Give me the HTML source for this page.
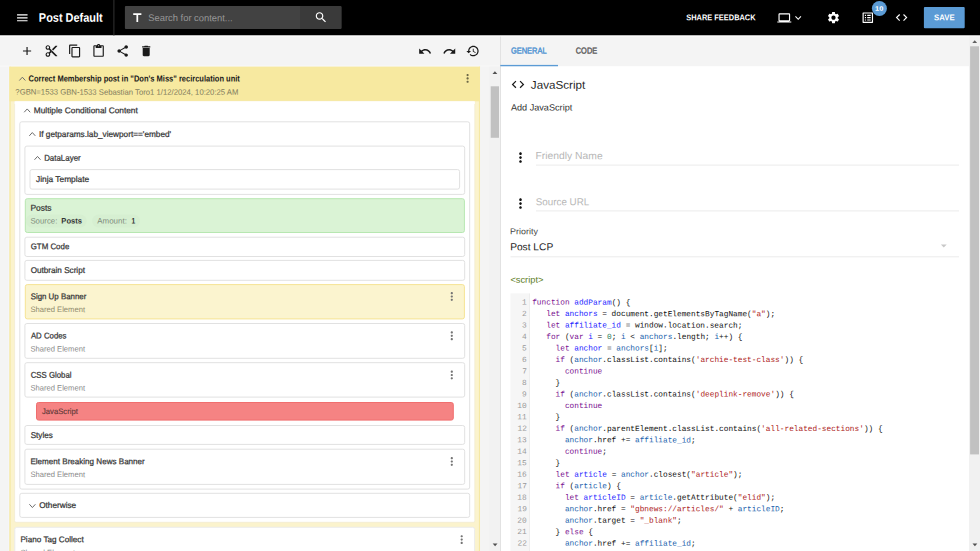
<!DOCTYPE html>
<html><head><meta charset="utf-8"><title>Post Default</title>
<style>
html,body{margin:0;padding:0;}
body{width:980px;height:551px;overflow:hidden;position:relative;background:#f4f4f4;font-family:'Liberation Sans', sans-serif;}
#shapes{position:absolute;left:0;top:0;}
.t{position:absolute;white-space:pre;transform-origin:0 0;}
.k{color:#7a1090}.d{color:#2222ff}.v{color:#1a62ad}.s{color:#ad2222}.n{color:#2a7a58}
</style></head><body>
<svg id="shapes" width="980" height="551" viewBox="0 0 980 551">
<rect x="0.00" y="0.00" width="980.00" height="35.50" fill="#000"/>
<rect x="0.00" y="35.50" width="980.00" height="1.10" fill="#fdfdfd"/>
<path transform="translate(15.30 10.80) scale(0.5833)" fill="#fff" fill-opacity="1" d="M3 18h18v-2H3v2zm0-5h18v-2H3v2zm0-7v2h18V6H3z"/>
<rect x="113.40" y="0.00" width="1.00" height="35.50" fill="#333"/>
<rect x="124.90" y="6.00" width="216.50" height="23.10" fill="#424242" rx="1"/>
<rect x="300.00" y="6.00" width="41.40" height="23.10" fill="#3a3a3a" rx="1"/>
<path transform="translate(130.30 10.80) scale(0.5833)" fill="#fff" fill-opacity="1" d="M5 4v3h5.5v12h3V7H19V4z"/>
<path transform="translate(314.00 10.40) scale(0.5833)" fill="#fff" fill-opacity="1" d="M15.5 14h-.79l-.28-.27C15.41 12.59 16 11.11 16 9.5 16 5.91 13.09 3 9.5 3S3 5.91 3 9.5 5.91 16 9.5 16c1.61 0 3.09-.59 4.23-1.57l.27.28v.79l5 4.99L20.49 19l-4.99-5zm-6 0C7.01 14 5 11.99 5 9.5S7.01 5 9.5 5 14 7.01 14 9.5 11.99 14 9.5 14z"/>
<path transform="translate(777.30 10.90) scale(0.5833)" fill="#fff" fill-opacity="1" d="M20 18c1.1 0 1.99-.9 1.99-2L22 6c0-1.1-.9-2-2-2H4c-1.1 0-2 .9-2 2v10c0 1.1.9 2 2 2H0v2h24v-2h-4zM4 6h16v10H4V6z"/>
<path transform="translate(791.95 11.55) scale(0.5208)" fill="#fff" fill-opacity="1" d="M16.59 8.59L12 13.17 7.41 8.59 6 10l6 6 6-6z"/>
<path transform="translate(826.50 10.70) scale(0.5833)" fill="#fff" fill-opacity="1" d="M19.14 12.94c.04-.3.06-.61.06-.94 0-.32-.02-.64-.07-.94l2.03-1.58c.18-.14.23-.41.12-.61l-1.92-3.32c-.12-.22-.37-.29-.59-.22l-2.39.96c-.5-.38-1.03-.7-1.62-.94l-.36-2.54c-.04-.24-.24-.41-.48-.41h-3.84c-.24 0-.43.17-.47.41l-.36 2.54c-.59.24-1.13.57-1.62.94l-2.39-.96c-.22-.08-.47 0-.59.22L2.74 8.87c-.12.21-.08.47.12.61l2.03 1.58c-.05.3-.09.63-.09.94s.02.64.07.94l-2.03 1.58c-.18.14-.23.41-.12.61l1.92 3.32c.12.22.37.29.59.22l2.39-.96c.5.38 1.03.7 1.62.94l.36 2.54c.05.24.24.41.48.41h3.84c.24 0 .44-.17.47-.41l.36-2.54c.59-.24 1.13-.56 1.62-.94l2.39.96c.22.08.47 0 .59-.22l1.92-3.32c.12-.22.07-.47-.12-.61l-2.01-1.58zM12 15.6c-1.98 0-3.6-1.62-3.6-3.6s1.62-3.6 3.6-3.6 3.6 1.62 3.6 3.6-1.62 3.6-3.6 3.6z"/>
<path transform="translate(860.80 10.70) scale(0.5833)" fill="#fff" fill-opacity="1" d="M11 7h6v2h-6zm0 4h6v2h-6zm0 4h6v2h-6zM7 7h2v2H7zm0 4h2v2H7zm0 4h2v2H7zM20.1 3H3.9c-.5 0-.9.4-.9.9v16.2c0 .4.4.9.9.9h16.2c.4 0 .9-.5.9-.9V3.9c0-.5-.5-.9-.9-.9zM19 19H5V5h14v14z"/>
<circle cx="879.4" cy="8.5" r="7.5" fill="#5b9bd5"/>
<path transform="translate(894.60 10.60) scale(0.5833)" fill="#fff" fill-opacity="1" d="M9.4 16.6L4.8 12l4.6-4.6L8 6l-6 6 6 6 1.4-1.4zm5.2 0l4.6-4.6-4.6-4.6L16 6l6 6-6 6-1.4-1.4z"/>
<rect x="923.90" y="7.10" width="40.80" height="21.20" fill="#5b9bd5" rx="1"/>
<path transform="translate(20.05 44.00) scale(0.5833)" fill="#1a1a1a" fill-opacity="1" d="M19 13h-6v6h-2v-6H5v-2h6V5h2v6h6v2z"/>
<path transform="translate(44.40 44.00) scale(0.5833)" fill="#1a1a1a" fill-opacity="1" d="M9.64 7.64c.23-.5.36-1.05.36-1.64 0-2.21-1.79-4-4-4S2 3.79 2 6s1.79 4 4 4c.59 0 1.14-.13 1.64-.36L10 12l-2.36 2.36C7.14 14.13 6.59 14 6 14c-2.21 0-4 1.79-4 4s1.79 4 4 4 4-1.79 4-4c0-.59-.13-1.14-.36-1.64L12 14l7 7h3v-1L9.64 7.64zM6 8c-1.1 0-2-.89-2-2s.9-2 2-2 2 .89 2 2-.9 2-2 2zm0 12c-1.1 0-2-.89-2-2s.9-2 2-2 2 .89 2 2-.9 2-2 2zm6-7.5c-.28 0-.5-.22-.5-.5s.22-.5.5-.5.5.22.5.5-.22.5-.5.5zM19 3l-6 6 2 2 7-7V3z"/>
<path transform="translate(67.90 44.00) scale(0.5833)" fill="#1a1a1a" fill-opacity="1" d="M16 1H4c-1.1 0-2 .9-2 2v14h2V3h12V1zm3 4H8c-1.1 0-2 .9-2 2v14c0 1.1.9 2 2 2h11c1.1 0 2-.9 2-2V7c0-1.1-.9-2-2-2zm0 16H8V7h11v14z"/>
<path transform="translate(91.60 44.00) scale(0.5833)" fill="#1a1a1a" fill-opacity="1" d="M19 2h-4.18C14.4.84 13.3 0 12 0c-1.3 0-2.4.84-2.82 2H5c-1.1 0-2 .9-2 2v16c0 1.1.9 2 2 2h14c1.1 0 2-.9 2-2V4c0-1.1-.9-2-2-2zm-7 0c.55 0 1 .45 1 1s-.45 1-1 1-1-.45-1-1 .45-1 1-1zm7 18H5V4h2v3h10V4h2v16z"/>
<path transform="translate(115.70 44.00) scale(0.5833)" fill="#1a1a1a" fill-opacity="1" d="M18 16.08c-.76 0-1.44.3-1.96.77L8.91 12.7c.05-.23.09-.46.09-.7s-.04-.47-.09-.7l7.05-4.11c.54.5 1.25.81 2.04.81 1.66 0 3-1.34 3-3s-1.34-3-3-3-3 1.34-3 3c0 .24.04.47.09.7L8.04 9.81C7.5 9.31 6.79 9 6 9c-1.66 0-3 1.34-3 3s1.34 3 3 3c.79 0 1.5-.31 2.04-.81l7.12 4.16c-.05.21-.08.43-.08.65 0 1.61 1.31 2.92 2.92 2.92 1.61 0 2.92-1.31 2.92-2.92s-1.31-2.92-2.92-2.92z"/>
<path transform="translate(139.20 44.00) scale(0.5833)" fill="#1a1a1a" fill-opacity="1" d="M6 19c0 1.1.9 2 2 2h8c1.1 0 2-.9 2-2V7H6v12zM19 4h-3.5l-1-1h-5l-1 1H5v2h14V4z"/>
<path transform="translate(418.00 44.30) scale(0.5833)" fill="#1a1a1a" fill-opacity="1" d="M12.5 8c-2.65 0-5.05.99-6.9 2.6L2 7v9h9l-3.62-3.62c1.39-1.16 3.16-1.88 5.12-1.88 3.54 0 6.55 2.31 7.6 5.5l2.37-.78C21.08 11.03 17.15 8 12.5 8z"/>
<path transform="translate(442.40 44.30) scale(0.5833)" fill="#1a1a1a" fill-opacity="1" d="M18.4 10.6C16.55 8.99 14.15 8 11.5 8c-4.65 0-8.58 3.03-9.96 7.22L3.9 16c1.05-3.19 4.05-5.5 7.6-5.5 1.95 0 3.73.72 5.12 1.88L13 16h9V7l-3.6 3.6z"/>
<path transform="translate(465.80 44.00) scale(0.5833)" fill="#1a1a1a" fill-opacity="1" d="M13 3c-4.97 0-9 4.03-9 9H1l3.89 3.89.07.14L9 12H6c0-3.87 3.13-7 7-7s7 3.13 7 7-3.13 7-7 7c-1.93 0-3.68-.79-4.94-2.06l-1.42 1.42C8.27 19.99 10.51 21 13 21c4.97 0 9-4.03 9-9s-4.03-9-9-9zm-1 5v5l4.28 2.54.72-1.21-3.5-2.08V8H12z"/>
<rect x="0.00" y="65.60" width="500.00" height="1.00" fill="#f9f9f9"/>
<rect x="8.20" y="66.60" width="1.20" height="484.40" fill="#f6f6fa"/>
<rect x="9.40" y="66.70" width="470.70" height="484.30" fill="#fbf3cd"/>
<rect x="9.40" y="66.70" width="1.30" height="484.30" fill="#f6e8a4"/>
<rect x="478.90" y="66.70" width="1.20" height="484.30" fill="#f6e8a4"/>
<rect x="9.40" y="66.70" width="470.70" height="34.60" fill="#f7e9a0"/>
<path d="M19.35 80.50L22.35 77.20L25.35 80.50" fill="none" stroke="#6c6c6c" stroke-width="1.0"/>
<path transform="translate(460.90 71.70) scale(0.5583)" fill="#6c6746" fill-opacity="1" d="M12 8c1.1 0 2-.9 2-2s-.9-2-2-2-2 .9-2 2 .9 2 2 2zm0 2c-1.1 0-2 .9-2 2s.9 2 2 2 2-.9 2-2-.9-2-2-2zm0 6c-1.1 0-2 .9-2 2s.9 2 2 2 2-.9 2-2-.9-2-2-2z"/>
<rect x="14.60" y="101.30" width="460.20" height="421.00" fill="#fff" rx="1.5" stroke="#f0ead0" stroke-width="0.7"/>
<rect x="14.60" y="101.30" width="460.20" height="2.70" fill="#fff"/>
<path d="M24.20 112.25L27.20 108.95L30.20 112.25" fill="none" stroke="#6c6c6c" stroke-width="1.0"/>
<rect x="19.80" y="121.80" width="449.90" height="367.30" fill="#fff" rx="2" stroke="#e1e1e1" stroke-width="1.0"/>
<path d="M29.30 135.85L32.30 132.55L35.30 135.85" fill="none" stroke="#6c6c6c" stroke-width="1.0"/>
<rect x="24.90" y="146.10" width="439.80" height="48.30" fill="#fff" rx="2" stroke="#e1e1e1" stroke-width="1.0"/>
<path d="M34.50 159.75L37.50 156.45L40.50 159.75" fill="none" stroke="#6c6c6c" stroke-width="1.0"/>
<rect x="30.00" y="169.60" width="429.60" height="19.50" fill="#fff" rx="2" stroke="#e1e1e1" stroke-width="1.0"/>
<rect x="25.30" y="198.70" width="439.10" height="33.80" fill="#daf3d5" rx="2" stroke="#b7e7b1" stroke-width="1.0"/>
<rect x="25.80" y="214.60" width="60.90" height="12.80" fill="#d6efd1" rx="6.4"/>
<rect x="92.20" y="214.60" width="47.80" height="12.80" fill="#d6efd1" rx="6.4"/>
<rect x="24.90" y="237.20" width="439.80" height="19.30" fill="#fff" rx="2" stroke="#e1e1e1" stroke-width="1.0"/>
<rect x="24.90" y="260.40" width="439.80" height="19.90" fill="#fff" rx="2" stroke="#e1e1e1" stroke-width="1.0"/>
<rect x="25.30" y="284.60" width="439.10" height="34.30" fill="#fbf4cf" rx="2" stroke="#f5e394" stroke-width="1.0"/>
<path transform="translate(445.10 289.80) scale(0.5583)" fill="#747474" fill-opacity="1" d="M12 8c1.1 0 2-.9 2-2s-.9-2-2-2-2 .9-2 2 .9 2 2 2zm0 2c-1.1 0-2 .9-2 2s.9 2 2 2 2-.9 2-2-.9-2-2-2zm0 6c-1.1 0-2 .9-2 2s.9 2 2 2 2-.9 2-2-.9-2-2-2z"/>
<rect x="24.90" y="323.50" width="439.80" height="34.80" fill="#fff" rx="2" stroke="#e1e1e1" stroke-width="1.0"/>
<path transform="translate(445.10 329.10) scale(0.5583)" fill="#747474" fill-opacity="1" d="M12 8c1.1 0 2-.9 2-2s-.9-2-2-2-2 .9-2 2 .9 2 2 2zm0 2c-1.1 0-2 .9-2 2s.9 2 2 2 2-.9 2-2-.9-2-2-2zm0 6c-1.1 0-2 .9-2 2s.9 2 2 2 2-.9 2-2-.9-2-2-2z"/>
<rect x="24.90" y="362.70" width="439.80" height="34.40" fill="#fff" rx="2" stroke="#e1e1e1" stroke-width="1.0"/>
<path transform="translate(445.10 368.30) scale(0.5583)" fill="#747474" fill-opacity="1" d="M12 8c1.1 0 2-.9 2-2s-.9-2-2-2-2 .9-2 2 .9 2 2 2zm0 2c-1.1 0-2 .9-2 2s.9 2 2 2 2-.9 2-2-.9-2-2-2zm0 6c-1.1 0-2 .9-2 2s.9 2 2 2 2-.9 2-2-.9-2-2-2z"/>
<rect x="36.50" y="402.50" width="416.80" height="17.60" fill="#f58383" rx="2" stroke="#f06e6e" stroke-width="1.0"/>
<rect x="24.90" y="425.50" width="439.80" height="18.90" fill="#fff" rx="2" stroke="#e1e1e1" stroke-width="1.0"/>
<rect x="24.90" y="449.20" width="439.80" height="35.20" fill="#fff" rx="2" stroke="#e1e1e1" stroke-width="1.0"/>
<path transform="translate(445.10 454.80) scale(0.5583)" fill="#747474" fill-opacity="1" d="M12 8c1.1 0 2-.9 2-2s-.9-2-2-2-2 .9-2 2 .9 2 2 2zm0 2c-1.1 0-2 .9-2 2s.9 2 2 2 2-.9 2-2-.9-2-2-2zm0 6c-1.1 0-2 .9-2 2s.9 2 2 2 2-.9 2-2-.9-2-2-2z"/>
<rect x="19.80" y="493.30" width="449.90" height="24.10" fill="#fff" rx="2" stroke="#e1e1e1" stroke-width="1.0"/>
<path d="M29.40 504.25L32.40 507.55L35.40 504.25" fill="none" stroke="#6c6c6c" stroke-width="1.0"/>
<rect x="14.80" y="527.30" width="459.80" height="37.70" fill="#fff" rx="2" stroke="#ececec" stroke-width="1.0"/>
<path transform="translate(455.00 532.90) scale(0.5583)" fill="#747474" fill-opacity="1" d="M12 8c1.1 0 2-.9 2-2s-.9-2-2-2-2 .9-2 2 .9 2 2 2zm0 2c-1.1 0-2 .9-2 2s.9 2 2 2 2-.9 2-2-.9-2-2-2zm0 6c-1.1 0-2 .9-2 2s.9 2 2 2 2-.9 2-2-.9-2-2-2z"/>
<rect x="480.10" y="66.60" width="20.20" height="484.40" fill="#f4f4f4"/>
<rect x="489.20" y="66.60" width="11.10" height="484.40" fill="#f2f2f2"/>
<rect x="490.70" y="86.30" width="8.30" height="51.50" fill="#c1c1c1"/>
<polygon points="492.50,74.05 494.90,71.35 497.30,74.05" fill="#505050"/>
<polygon points="492.70,543.45 495.10,546.15 497.50,543.45" fill="#505050"/>
<rect x="500.30" y="66.20" width="468.70" height="484.80" fill="#fff"/>
<rect x="500.00" y="36.60" width="1.00" height="514.40" fill="#e2e2e2"/>
<rect x="500.30" y="64.90" width="57.70" height="1.35" fill="#5b9bd5"/>
<path transform="translate(510.45 76.85) scale(0.6292)" fill="#1a1a1a" fill-opacity="1" d="M9.4 16.6L4.8 12l4.6-4.6L8 6l-6 6 6 6 1.4-1.4zm5.2 0l4.6-4.6-4.6-4.6L16 6l6 6-6 6-1.4-1.4z"/>
<path transform="translate(512.65 149.75) scale(0.6542)" fill="#111" fill-opacity="1" d="M12 8c1.1 0 2-.9 2-2s-.9-2-2-2-2 .9-2 2 .9 2 2 2zm0 2c-1.1 0-2 .9-2 2s.9 2 2 2 2-.9 2-2-.9-2-2-2zm0 6c-1.1 0-2 .9-2 2s.9 2 2 2 2-.9 2-2-.9-2-2-2z"/>
<rect x="536.00" y="164.60" width="423.00" height="1.00" fill="#ececec"/>
<path transform="translate(512.65 195.75) scale(0.6542)" fill="#111" fill-opacity="1" d="M12 8c1.1 0 2-.9 2-2s-.9-2-2-2-2 .9-2 2 .9 2 2 2zm0 2c-1.1 0-2 .9-2 2s.9 2 2 2 2-.9 2-2-.9-2-2-2zm0 6c-1.1 0-2 .9-2 2s.9 2 2 2 2-.9 2-2-.9-2-2-2z"/>
<rect x="536.00" y="210.40" width="423.00" height="1.00" fill="#ececec"/>
<rect x="510.50" y="256.30" width="448.50" height="1.00" fill="#ececec"/>
<path transform="translate(936.80 238.70) scale(0.5833)" fill="#c8c8c8" fill-opacity="1" d="M7 10l5 5 5-5z"/>
<rect x="510.50" y="293.40" width="19.10" height="257.60" fill="#f6f6f6"/>
<rect x="529.00" y="293.40" width="0.70" height="257.60" fill="#e9e9e9"/>
<rect x="969.00" y="36.60" width="11.00" height="514.40" fill="#f1f1f1"/>
<rect x="970.10" y="46.30" width="8.90" height="408.10" fill="#c1c1c1"/>
<polygon points="972.30,43.05 974.70,40.35 977.10,43.05" fill="#606060"/>
<polygon points="972.50,543.45 974.90,546.15 977.30,543.45" fill="#505050"/>
</svg>
<div class="t" style="left:38px;top:9px;line-height:17px;transform:matrix(0.8905,0.0005,0,1,0.83,0.80);font-family:'Liberation Sans', sans-serif;font-size:12.3px;font-weight:700;color:#fff;">Post Default</div>
<div class="t" style="left:148px;top:11px;line-height:13px;transform:matrix(0.9840,0.0005,0,1,0.31,0.10);font-family:'Liberation Sans', sans-serif;font-size:9.52px;font-weight:400;color:#989898;">Search for content...</div>
<div class="t" style="left:686px;top:11px;line-height:12px;transform:matrix(0.8948,0.0005,0,1,0.28,0.20);font-family:'Liberation Sans', sans-serif;font-size:8.3px;font-weight:700;color:#fff;">SHARE FEEDBACK</div>
<div class="t" style="left:875px;top:3px;line-height:9px;transform:matrix(1.1538,0.0005,0,1,0.12,0.80);font-family:'Liberation Sans', sans-serif;font-size:6.4px;font-weight:700;color:#fff;">10</div>
<div class="t" style="left:934px;top:11px;line-height:12px;transform:matrix(0.9349,0.0005,0,1,0.07,0.30);font-family:'Liberation Sans', sans-serif;font-size:8.3px;font-weight:700;color:#fff;">SAVE</div>
<div class="t" style="left:28px;top:72px;line-height:12px;transform:matrix(0.8534,0.0005,0,1,0.59,0.50);font-family:'Liberation Sans', sans-serif;font-size:8.8px;font-weight:700;color:#1a1a1a;">Correct Membership post in "Don's Miss" recirculation unit</div>
<div class="t" style="left:15px;top:86px;line-height:11px;transform:matrix(0.9854,0.0005,0,1,0.35,0.60);font-family:'Liberation Sans', sans-serif;font-size:7.84px;font-weight:400;color:#7f7b5c;">?GBN=1533 GBN-1533 Sebastian Toro1 1/12/2024, 10:20:25 AM</div>
<div class="t" style="left:33px;top:104px;line-height:12px;transform:matrix(0.9928,0.0005,0,1,0.80,0.30);font-family:'Liberation Sans', sans-serif;font-size:8.4px;font-weight:400;color:#363636;-webkit-text-stroke:0.24px #363636;">Multiple Conditional Content</div>
<div class="t" style="left:38px;top:127px;line-height:12px;transform:matrix(0.9828,0.0005,0,1,0.96,0.90);font-family:'Liberation Sans', sans-serif;font-size:8.4px;font-weight:400;color:#363636;-webkit-text-stroke:0.24px #363636;">If getparams.lab_viewport=='embed'</div>
<div class="t" style="left:44px;top:151px;line-height:12px;transform:matrix(0.9464,0.0005,0,1,0.13,0.70);font-family:'Liberation Sans', sans-serif;font-size:8.4px;font-weight:400;color:#363636;-webkit-text-stroke:0.24px #363636;">DataLayer</div>
<div class="t" style="left:36px;top:173px;line-height:12px;transform:matrix(0.9972,0.0005,0,1,0.00,0.00);font-family:'Liberation Sans', sans-serif;font-size:8.4px;font-weight:400;color:#363636;-webkit-text-stroke:0.24px #363636;">Jinja Template</div>
<div class="t" style="left:30px;top:201px;line-height:12px;transform:matrix(1.0123,0.0005,0,1,0.39,0.70);font-family:'Liberation Sans', sans-serif;font-size:8.4px;font-weight:400;color:#363636;-webkit-text-stroke:0.24px #363636;">Posts</div>
<div class="t" style="left:30px;top:215px;line-height:11px;transform:matrix(0.9981,0.0005,0,1,0.40,0.40);font-family:'Liberation Sans', sans-serif;font-size:7.84px;font-weight:400;color:#7f8c7c;">Source:</div>
<div class="t" style="left:61px;top:215px;line-height:11px;transform:matrix(0.9707,0.0005,0,1,0.31,0.40);font-family:'Liberation Sans', sans-serif;font-size:7.84px;font-weight:700;color:#333;">Posts</div>
<div class="t" style="left:97px;top:215px;line-height:11px;transform:matrix(1.0175,0.0005,0,1,0.20,0.40);font-family:'Liberation Sans', sans-serif;font-size:7.84px;font-weight:400;color:#7f8c7c;">Amount:</div>
<div class="t" style="left:131px;top:215px;line-height:11px;transform:matrix(0.8533,0.0005,0,1,0.57,0.40);font-family:'Liberation Sans', sans-serif;font-size:7.84px;font-weight:700;color:#333;">1</div>
<div class="t" style="left:30px;top:240px;line-height:12px;transform:matrix(0.9432,0.0005,0,1,0.66,0.30);font-family:'Liberation Sans', sans-serif;font-size:8.4px;font-weight:400;color:#363636;-webkit-text-stroke:0.24px #363636;">GTM Code</div>
<div class="t" style="left:30px;top:263px;line-height:12px;transform:matrix(0.9722,0.0005,0,1,0.66,0.90);font-family:'Liberation Sans', sans-serif;font-size:8.4px;font-weight:400;color:#363636;-webkit-text-stroke:0.24px #363636;">Outbrain Script</div>
<div class="t" style="left:30px;top:290px;line-height:12px;transform:matrix(0.9407,0.0005,0,1,0.66,0.20);font-family:'Liberation Sans', sans-serif;font-size:8.4px;font-weight:400;color:#363636;-webkit-text-stroke:0.24px #363636;">Sign Up Banner</div>
<div class="t" style="left:30px;top:304px;line-height:11px;transform:matrix(0.9730,0.0005,0,1,0.41,0.10);font-family:'Liberation Sans', sans-serif;font-size:7.84px;font-weight:400;color:#8f8a6c;">Shared Element</div>
<div class="t" style="left:30px;top:329px;line-height:12px;transform:matrix(0.9316,0.0005,0,1,0.90,0.50);font-family:'Liberation Sans', sans-serif;font-size:8.4px;font-weight:400;color:#363636;-webkit-text-stroke:0.24px #363636;">AD Codes</div>
<div class="t" style="left:30px;top:343px;line-height:11px;transform:matrix(0.9730,0.0005,0,1,0.41,0.40);font-family:'Liberation Sans', sans-serif;font-size:7.84px;font-weight:400;color:#8a8a8a;">Shared Element</div>
<div class="t" style="left:30px;top:368px;line-height:12px;transform:matrix(0.9326,0.0005,0,1,0.67,0.70);font-family:'Liberation Sans', sans-serif;font-size:8.4px;font-weight:400;color:#363636;-webkit-text-stroke:0.24px #363636;">CSS Global</div>
<div class="t" style="left:30px;top:382px;line-height:11px;transform:matrix(0.9730,0.0005,0,1,0.41,0.60);font-family:'Liberation Sans', sans-serif;font-size:7.84px;font-weight:400;color:#8a8a8a;">Shared Element</div>
<div class="t" style="left:42px;top:406px;line-height:11px;transform:matrix(0.9808,0.0005,0,1,0.00,0.00);font-family:'Liberation Sans', sans-serif;font-size:7.84px;font-weight:400;color:#5a3636;-webkit-text-stroke:0.1px #5a3636;">JavaScript</div>
<div class="t" style="left:30px;top:428px;line-height:12px;transform:matrix(0.9689,0.0005,0,1,0.66,0.90);font-family:'Liberation Sans', sans-serif;font-size:8.4px;font-weight:400;color:#363636;-webkit-text-stroke:0.24px #363636;">Styles</div>
<div class="t" style="left:30px;top:455px;line-height:12px;transform:matrix(0.9632,0.0005,0,1,0.42,0.20);font-family:'Liberation Sans', sans-serif;font-size:8.4px;font-weight:400;color:#363636;-webkit-text-stroke:0.24px #363636;">Element Breaking News Banner</div>
<div class="t" style="left:30px;top:469px;line-height:11px;transform:matrix(0.9730,0.0005,0,1,0.41,0.10);font-family:'Liberation Sans', sans-serif;font-size:7.84px;font-weight:400;color:#8a8a8a;">Shared Element</div>
<div class="t" style="left:39px;top:499px;line-height:12px;transform:matrix(0.9826,0.0005,0,1,0.15,0.00);font-family:'Liberation Sans', sans-serif;font-size:8.4px;font-weight:400;color:#363636;-webkit-text-stroke:0.24px #363636;">Otherwise</div>
<div class="t" style="left:20px;top:533px;line-height:12px;transform:matrix(0.9736,0.0005,0,1,0.41,0.30);font-family:'Liberation Sans', sans-serif;font-size:8.4px;font-weight:400;color:#363636;-webkit-text-stroke:0.24px #363636;">Piano Tag Collect</div>
<div class="t" style="left:20px;top:547px;line-height:11px;transform:matrix(0.9730,0.0005,0,1,0.41,0.20);font-family:'Liberation Sans', sans-serif;font-size:7.84px;font-weight:400;color:#8a8a8a;">Shared Element</div>
<div class="t" style="left:510px;top:44px;line-height:12px;transform:matrix(0.8687,0.0005,0,1,0.88,0.60);font-family:'Liberation Sans', sans-serif;font-size:8.6px;font-weight:400;color:#4f93d2;-webkit-text-stroke:0.42px #4f93d2;">GENERAL</div>
<div class="t" style="left:575px;top:44px;line-height:12px;transform:matrix(0.8612,0.0005,0,1,0.78,0.60);font-family:'Liberation Sans', sans-serif;font-size:8.6px;font-weight:400;color:#5c5c5c;-webkit-text-stroke:0.42px #5c5c5c;">CODE</div>
<div class="t" style="left:530px;top:76px;line-height:16px;transform:matrix(1.0404,0.0005,0,1,0.84,0.80);font-family:'Liberation Sans', sans-serif;font-size:11.2px;font-weight:400;color:#1f1f1f;">JavaScript</div>
<div class="t" style="left:510px;top:101px;line-height:13px;transform:matrix(1.0191,0.0005,0,1,0.90,0.40);font-family:'Liberation Sans', sans-serif;font-size:8.96px;font-weight:400;color:#333;">Add JavaScript</div>
<div class="t" style="left:535px;top:149px;line-height:14px;transform:matrix(1.0257,0.0005,0,1,0.43,0.10);font-family:'Liberation Sans', sans-serif;font-size:10.08px;font-weight:400;color:#b7b7b7;">Friendly Name</div>
<div class="t" style="left:535px;top:195px;line-height:14px;transform:matrix(0.9759,0.0005,0,1,0.71,0.20);font-family:'Liberation Sans', sans-serif;font-size:10.08px;font-weight:400;color:#b7b7b7;">Source URL</div>
<div class="t" style="left:510px;top:225px;line-height:12px;transform:matrix(1.0485,0.0005,0,1,0.11,0.20);font-family:'Liberation Sans', sans-serif;font-size:8.5px;font-weight:400;color:#444;">Priority</div>
<div class="t" style="left:510px;top:240px;line-height:14px;transform:matrix(1.0109,0.0005,0,1,0.14,0.20);font-family:'Liberation Sans', sans-serif;font-size:10.08px;font-weight:400;color:#222;">Post LCP</div>
<div class="t" style="left:510px;top:273px;line-height:13px;transform:matrix(1.0387,0.0005,0,1,0.38,0.70);font-family:'Liberation Sans', sans-serif;font-size:8.96px;font-weight:400;color:#5b7b1c;">&lt;script></div>
<div class="t" style="left:532px;top:296px;line-height:11px;transform:matrix(0.9943,0.0005,0,1,0.20,0.60);font-family:'Liberation Mono', monospace;font-size:7.84px;font-weight:400;color:#111;"><span class="k">function</span> <span class="d">addParam</span>() {</div>
<div class="t" style="left:522px;top:296px;line-height:11px;transform:matrix(1.0000,0.0005,0,1,0.05,0.60);font-family:'Liberation Mono', monospace;font-size:7.84px;font-weight:400;color:#999;">1</div>
<div class="t" style="left:532px;top:308px;line-height:11px;transform:matrix(0.9943,0.0005,0,1,0.20,0.08);font-family:'Liberation Mono', monospace;font-size:7.84px;font-weight:400;color:#111;">   <span class="k">let</span> <span class="d">anchors</span> = document.getElementsByTagName(<span class="s">"a"</span>);</div>
<div class="t" style="left:522px;top:308px;line-height:11px;transform:matrix(1.0000,0.0005,0,1,0.05,0.08);font-family:'Liberation Mono', monospace;font-size:7.84px;font-weight:400;color:#999;">2</div>
<div class="t" style="left:532px;top:319px;line-height:11px;transform:matrix(0.9943,0.0005,0,1,0.20,0.55);font-family:'Liberation Mono', monospace;font-size:7.84px;font-weight:400;color:#111;">   <span class="k">let</span> <span class="d">affiliate_id</span> = window.location.search;</div>
<div class="t" style="left:522px;top:319px;line-height:11px;transform:matrix(1.0000,0.0005,0,1,0.05,0.55);font-family:'Liberation Mono', monospace;font-size:7.84px;font-weight:400;color:#999;">3</div>
<div class="t" style="left:532px;top:331px;line-height:11px;transform:matrix(0.9943,0.0005,0,1,0.20,0.03);font-family:'Liberation Mono', monospace;font-size:7.84px;font-weight:400;color:#111;">   <span class="k">for</span> (<span class="k">var</span> <span class="d">i</span> = <span class="n">0</span>; <span class="v">i</span> &lt; <span class="v">anchors</span>.length; <span class="v">i</span>++) {</div>
<div class="t" style="left:522px;top:331px;line-height:11px;transform:matrix(1.0000,0.0005,0,1,0.05,0.03);font-family:'Liberation Mono', monospace;font-size:7.84px;font-weight:400;color:#999;">4</div>
<div class="t" style="left:532px;top:342px;line-height:11px;transform:matrix(0.9943,0.0005,0,1,0.20,0.50);font-family:'Liberation Mono', monospace;font-size:7.84px;font-weight:400;color:#111;">     <span class="k">let</span> <span class="d">anchor</span> = <span class="v">anchors</span>[<span class="v">i</span>];</div>
<div class="t" style="left:522px;top:342px;line-height:11px;transform:matrix(1.0000,0.0005,0,1,0.05,0.50);font-family:'Liberation Mono', monospace;font-size:7.84px;font-weight:400;color:#999;">5</div>
<div class="t" style="left:532px;top:353px;line-height:11px;transform:matrix(0.9943,0.0005,0,1,0.20,0.98);font-family:'Liberation Mono', monospace;font-size:7.84px;font-weight:400;color:#111;">     <span class="k">if</span> (<span class="v">anchor</span>.classList.contains(<span class="s">'archie-test-class'</span>)) {</div>
<div class="t" style="left:522px;top:353px;line-height:11px;transform:matrix(1.0000,0.0005,0,1,0.05,0.98);font-family:'Liberation Mono', monospace;font-size:7.84px;font-weight:400;color:#999;">6</div>
<div class="t" style="left:532px;top:365px;line-height:11px;transform:matrix(0.9943,0.0005,0,1,0.20,0.46);font-family:'Liberation Mono', monospace;font-size:7.84px;font-weight:400;color:#111;">       <span class="k">continue</span></div>
<div class="t" style="left:522px;top:365px;line-height:11px;transform:matrix(1.0000,0.0005,0,1,0.30,0.46);font-family:'Liberation Mono', monospace;font-size:7.84px;font-weight:400;color:#999;">7</div>
<div class="t" style="left:532px;top:376px;line-height:11px;transform:matrix(0.9943,0.0005,0,1,0.20,0.93);font-family:'Liberation Mono', monospace;font-size:7.84px;font-weight:400;color:#111;">     }</div>
<div class="t" style="left:522px;top:376px;line-height:11px;transform:matrix(1.0000,0.0005,0,1,0.05,0.93);font-family:'Liberation Mono', monospace;font-size:7.84px;font-weight:400;color:#999;">8</div>
<div class="t" style="left:532px;top:388px;line-height:11px;transform:matrix(0.9943,0.0005,0,1,0.20,0.41);font-family:'Liberation Mono', monospace;font-size:7.84px;font-weight:400;color:#111;">     <span class="k">if</span> (<span class="v">anchor</span>.classList.contains(<span class="s">'deeplink-remove'</span>)) {</div>
<div class="t" style="left:522px;top:388px;line-height:11px;transform:matrix(1.0000,0.0005,0,1,0.05,0.41);font-family:'Liberation Mono', monospace;font-size:7.84px;font-weight:400;color:#999;">9</div>
<div class="t" style="left:532px;top:399px;line-height:11px;transform:matrix(0.9943,0.0005,0,1,0.20,0.88);font-family:'Liberation Mono', monospace;font-size:7.84px;font-weight:400;color:#111;">       <span class="k">continue</span></div>
<div class="t" style="left:517px;top:399px;line-height:11px;transform:matrix(1.0000,0.0005,0,1,0.30,0.88);font-family:'Liberation Mono', monospace;font-size:7.84px;font-weight:400;color:#999;">10</div>
<div class="t" style="left:532px;top:411px;line-height:11px;transform:matrix(0.9943,0.0005,0,1,0.20,0.36);font-family:'Liberation Mono', monospace;font-size:7.84px;font-weight:400;color:#111;">     }</div>
<div class="t" style="left:517px;top:411px;line-height:11px;transform:matrix(1.0000,0.0005,0,1,0.30,0.36);font-family:'Liberation Mono', monospace;font-size:7.84px;font-weight:400;color:#999;">11</div>
<div class="t" style="left:532px;top:422px;line-height:11px;transform:matrix(0.9943,0.0005,0,1,0.20,0.84);font-family:'Liberation Mono', monospace;font-size:7.84px;font-weight:400;color:#111;">     <span class="k">if</span> (<span class="v">anchor</span>.parentElement.classList.contains(<span class="s">'all-related-sections'</span>)) {</div>
<div class="t" style="left:517px;top:422px;line-height:11px;transform:matrix(1.0000,0.0005,0,1,0.55,0.84);font-family:'Liberation Mono', monospace;font-size:7.84px;font-weight:400;color:#999;">12</div>
<div class="t" style="left:532px;top:434px;line-height:11px;transform:matrix(0.9943,0.0005,0,1,0.20,0.31);font-family:'Liberation Mono', monospace;font-size:7.84px;font-weight:400;color:#111;">       <span class="v">anchor</span>.href += <span class="v">affiliate_id</span>;</div>
<div class="t" style="left:517px;top:434px;line-height:11px;transform:matrix(1.0000,0.0005,0,1,0.30,0.31);font-family:'Liberation Mono', monospace;font-size:7.84px;font-weight:400;color:#999;">13</div>
<div class="t" style="left:532px;top:445px;line-height:11px;transform:matrix(0.9943,0.0005,0,1,0.20,0.79);font-family:'Liberation Mono', monospace;font-size:7.84px;font-weight:400;color:#111;">       <span class="k">continue</span>;</div>
<div class="t" style="left:517px;top:445px;line-height:11px;transform:matrix(1.0000,0.0005,0,1,0.30,0.79);font-family:'Liberation Mono', monospace;font-size:7.84px;font-weight:400;color:#999;">14</div>
<div class="t" style="left:532px;top:457px;line-height:11px;transform:matrix(0.9943,0.0005,0,1,0.20,0.26);font-family:'Liberation Mono', monospace;font-size:7.84px;font-weight:400;color:#111;">     }</div>
<div class="t" style="left:517px;top:457px;line-height:11px;transform:matrix(1.0000,0.0005,0,1,0.30,0.26);font-family:'Liberation Mono', monospace;font-size:7.84px;font-weight:400;color:#999;">15</div>
<div class="t" style="left:532px;top:468px;line-height:11px;transform:matrix(0.9943,0.0005,0,1,0.20,0.74);font-family:'Liberation Mono', monospace;font-size:7.84px;font-weight:400;color:#111;">     <span class="k">let</span> <span class="d">article</span> = <span class="v">anchor</span>.closest(<span class="s">"article"</span>);</div>
<div class="t" style="left:517px;top:468px;line-height:11px;transform:matrix(1.0000,0.0005,0,1,0.30,0.74);font-family:'Liberation Mono', monospace;font-size:7.84px;font-weight:400;color:#999;">16</div>
<div class="t" style="left:532px;top:480px;line-height:11px;transform:matrix(0.9943,0.0005,0,1,0.20,0.22);font-family:'Liberation Mono', monospace;font-size:7.84px;font-weight:400;color:#111;">     <span class="k">if</span> (<span class="v">article</span>) {</div>
<div class="t" style="left:517px;top:480px;line-height:11px;transform:matrix(1.0000,0.0005,0,1,0.55,0.22);font-family:'Liberation Mono', monospace;font-size:7.84px;font-weight:400;color:#999;">17</div>
<div class="t" style="left:532px;top:491px;line-height:11px;transform:matrix(0.9943,0.0005,0,1,0.20,0.69);font-family:'Liberation Mono', monospace;font-size:7.84px;font-weight:400;color:#111;">       <span class="k">let</span> <span class="d">articleID</span> = <span class="v">article</span>.getAttribute(<span class="s">"elid"</span>);</div>
<div class="t" style="left:517px;top:491px;line-height:11px;transform:matrix(1.0000,0.0005,0,1,0.30,0.69);font-family:'Liberation Mono', monospace;font-size:7.84px;font-weight:400;color:#999;">18</div>
<div class="t" style="left:532px;top:503px;line-height:11px;transform:matrix(0.9943,0.0005,0,1,0.20,0.17);font-family:'Liberation Mono', monospace;font-size:7.84px;font-weight:400;color:#111;">       <span class="v">anchor</span>.href = <span class="s">"gbnews://articles/"</span> + <span class="v">articleID</span>;</div>
<div class="t" style="left:517px;top:503px;line-height:11px;transform:matrix(1.0000,0.0005,0,1,0.55,0.17);font-family:'Liberation Mono', monospace;font-size:7.84px;font-weight:400;color:#999;">19</div>
<div class="t" style="left:532px;top:514px;line-height:11px;transform:matrix(0.9943,0.0005,0,1,0.20,0.64);font-family:'Liberation Mono', monospace;font-size:7.84px;font-weight:400;color:#111;">       <span class="v">anchor</span>.target = <span class="s">"_blank"</span>;</div>
<div class="t" style="left:517px;top:514px;line-height:11px;transform:matrix(1.0000,0.0005,0,1,0.30,0.64);font-family:'Liberation Mono', monospace;font-size:7.84px;font-weight:400;color:#999;">20</div>
<div class="t" style="left:532px;top:526px;line-height:11px;transform:matrix(0.9943,0.0005,0,1,0.20,0.12);font-family:'Liberation Mono', monospace;font-size:7.84px;font-weight:400;color:#111;">     } <span class="k">else</span> {</div>
<div class="t" style="left:517px;top:526px;line-height:11px;transform:matrix(1.0000,0.0005,0,1,0.30,0.12);font-family:'Liberation Mono', monospace;font-size:7.84px;font-weight:400;color:#999;">21</div>
<div class="t" style="left:532px;top:537px;line-height:11px;transform:matrix(0.9943,0.0005,0,1,0.20,0.60);font-family:'Liberation Mono', monospace;font-size:7.84px;font-weight:400;color:#111;">       <span class="v">anchor</span>.href += <span class="v">affiliate_id</span>;</div>
<div class="t" style="left:517px;top:537px;line-height:11px;transform:matrix(1.0000,0.0005,0,1,0.55,0.60);font-family:'Liberation Mono', monospace;font-size:7.84px;font-weight:400;color:#999;">22</div>
<div class="t" style="left:532px;top:549px;line-height:11px;transform:matrix(0.9943,0.0005,0,1,0.20,0.07);font-family:'Liberation Mono', monospace;font-size:7.84px;font-weight:400;color:#111;">     }</div>
<div class="t" style="left:517px;top:549px;line-height:11px;transform:matrix(1.0000,0.0005,0,1,0.30,0.07);font-family:'Liberation Mono', monospace;font-size:7.84px;font-weight:400;color:#999;">23</div>
</body></html>
